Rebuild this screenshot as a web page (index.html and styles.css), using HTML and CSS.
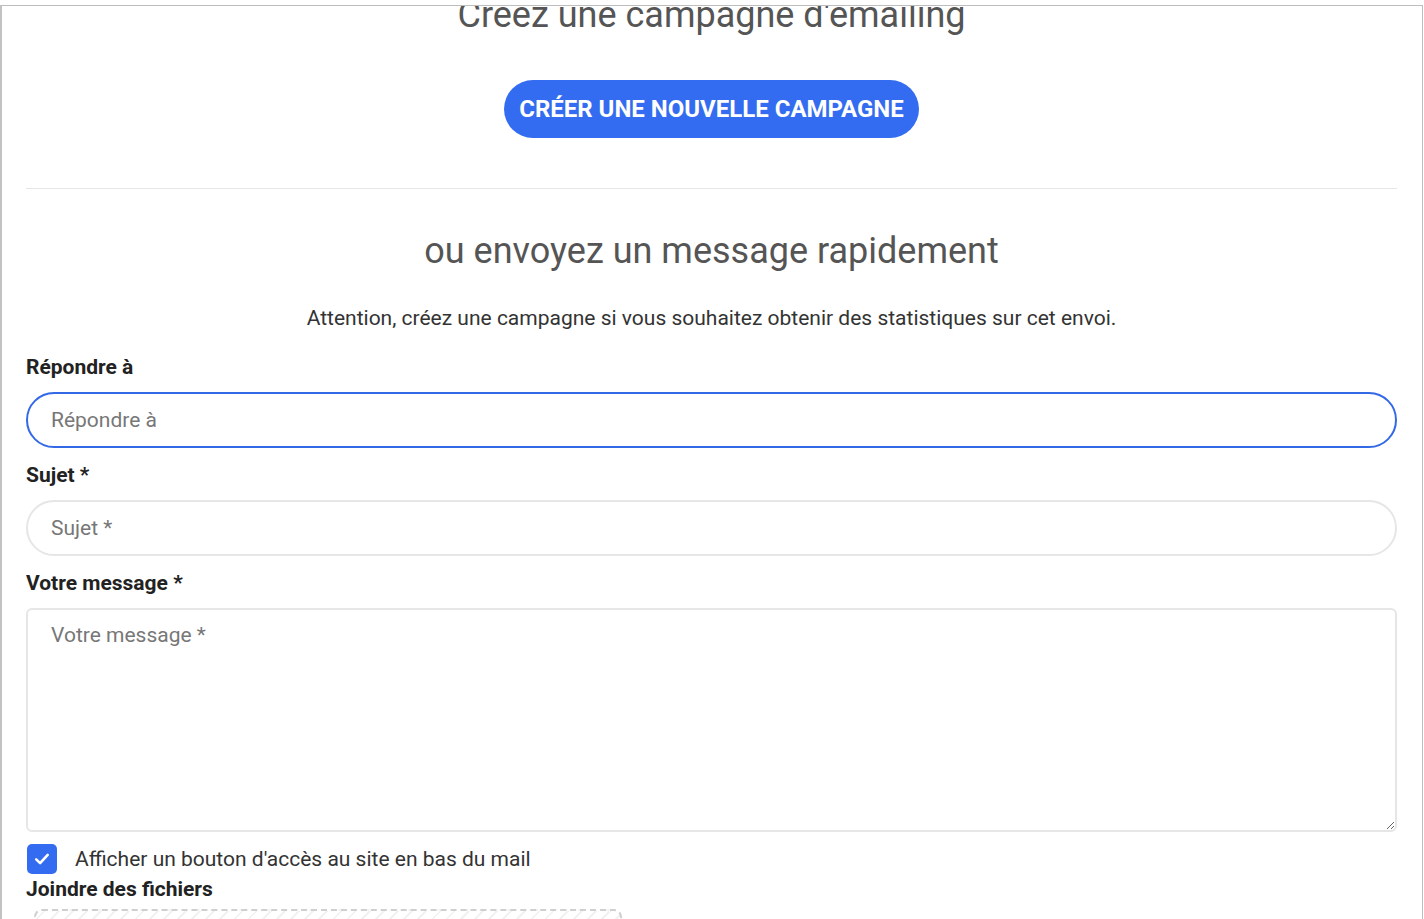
FILE: index.html
```html
<!DOCTYPE html>
<html lang="fr">
<head>
    <meta charset="UTF-8">
    <meta name="viewport" content="width=device-width, initial-scale=1.0">
    <title>Emailing</title>
    <link rel="stylesheet" href="styles.css">
</head>
<body>
    <!-- fenêtre de l'envoi -->
    <div class="modal">
        <div class="modal-body">
            <h2 class="title title-first">Créez une campagne d'emailing</h2>
            <div class="center">
                <button class="btn-primary">Créer une nouvelle campagne</button>
            </div>

            <hr class="divider">

            <h2 class="title">ou envoyez un message rapidement</h2>
            <p class="notice">Attention, créez une campagne si vous souhaitez obtenir des statistiques sur cet envoi.</p>

            <form class="quick-form">
                <label class="field-label" for="reply">Répondre à</label>
                <input class="field is-focus" id="reply" type="text" placeholder="Répondre à">

                <label class="field-label" for="subject">Sujet *</label>
                <input class="field" id="subject" type="text" placeholder="Sujet *">

                <label class="field-label" for="message">Votre message *</label>
                <textarea class="field field-area" id="message" placeholder="Votre message *"></textarea>

                <label class="check-row">
                    <span class="check-box">
                        <svg width="18" height="18" viewBox="0 0 18 18"><path d="M3.2 9.4l3.9 3.7 7.6-8.2" fill="none" stroke="#fff" stroke-width="2.6" stroke-linecap="round" stroke-linejoin="round"/></svg>
                    </span>
                    Afficher un bouton d'accès au site en bas du mail
                </label>

                <div class="field-label label-files">Joindre des fichiers</div>
                <div class="dropzone"></div>
            </form>
        </div>
    </div>
</body>
</html>
```

FILE: styles.css
```css
/* base */
* {
    margin: 0;
    padding: 0;
    box-sizing: border-box;
}

body {
    background: #fff;
    font-family: Roboto, 'Liberation Sans', sans-serif;
    color: #222;
    overflow: hidden;
}

/* cadre de la fenêtre */
.modal {
    margin-top: 5px;
    height: 914px;
    border-top: 1px solid #bdbdbd;
    border-left: 2px solid #c2c2c2;
    border-right: 1px solid #bdbdbd;
    width: 1423px;
    overflow: hidden;
}

.modal-body {
    padding: 0 25px 0 24px;
}

.title {
    font-size: 36px;
    font-weight: 400;
    line-height: 40px;
    color: #555;
    text-align: center;
}

/* le contenu est défilé, le titre est coupé en haut */
.title-first {
    margin-top: -11px;
}

.center {
    text-align: center;
    margin-top: 45px;
}

.btn-primary {
    background: #336cf0;
    color: #fff;
    border: none;
    height: 58px;
    padding: 0 15px;
    border-radius: 29px;
    font-family: Roboto, 'Liberation Sans', sans-serif;
    font-weight: 700;
    font-size: 24px;
    text-transform: uppercase;
    cursor: pointer;
}

.divider {
    border: none;
    border-top: 1px solid #e6e6e6;
    margin: 50px 0 42px;
}

.notice {
    margin-top: 35px;
    text-align: center;
    font-size: 21px;
    line-height: 24px;
    color: #333;
}

/* formulaire */
.quick-form {
    margin-top: 22px;
}

.field-label {
    display: block;
    font-size: 21px;
    font-weight: 700;
    line-height: 26px;
    padding-top: 2px;
    color: #222;
    margin-bottom: 12px;
}

.field {
    display: block;
    width: 100%;
    height: 56px;
    border: 2px solid #e6e6e6;
    border-radius: 28px;
    padding: 0 23px;
    font-family: Roboto, 'Liberation Sans', sans-serif;
    font-size: 21px;
    color: #333;
    outline: none;
    margin-bottom: 12px;
}

.field::placeholder {
    color: #777;
}

.field.is-focus {
    border-color: #3369e7;
}

.field-area {
    height: 224px;
    border-radius: 6px;
    padding: 13px 23px;
    line-height: 24px;
    resize: vertical;
    margin-bottom: 12px;
}

.check-row {
    display: flex;
    align-items: center;
    gap: 18px;
    font-size: 21px;
    line-height: 30px;
    color: #333;
    padding-left: 1px;
}

.check-box {
    width: 30px;
    height: 30px;
    border-radius: 5px;
    background: #336cf0;
    display: flex;
    align-items: center;
    justify-content: center;
}

.label-files {
    margin-top: 0;
    margin-bottom: 7px;
}

.dropzone {
    margin-left: 8px;
    width: 588px;
    height: 120px;
    border: 2px dashed #cfcfcf;
    border-radius: 8px;
    background: repeating-linear-gradient(-45deg, #fff 0, #fff 8px, #f2f2f2 8px, #f2f2f2 10px);
}
```
